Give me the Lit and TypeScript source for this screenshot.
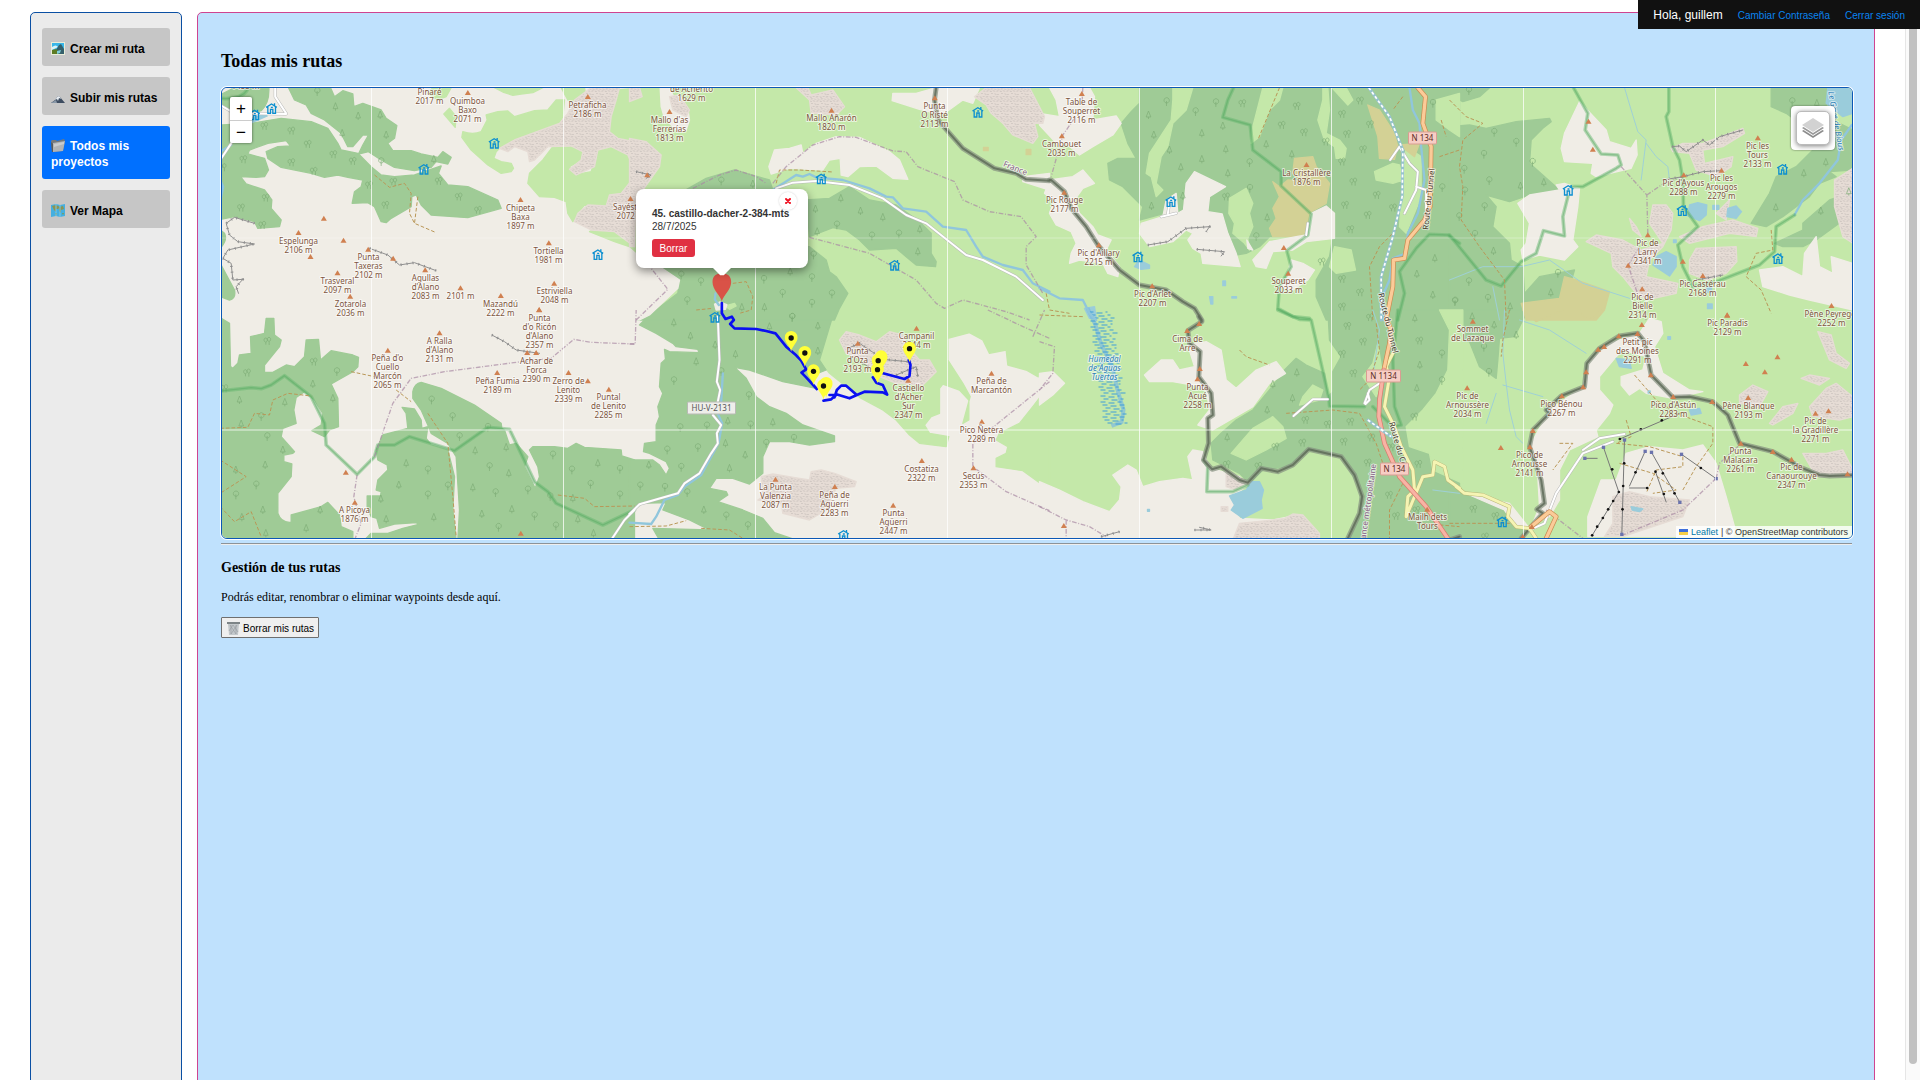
import { LitElement, html, svg, css } from "lit";
import { customElement, state } from "lit/decorators.js";

/* Map sheets: every sheet is surveyed at three units per map pixel. */
const SHEETS: Record<string, [number, number]> = {
  A: [215, 80], B: [215, 310], C: [630, 310], D: [630, 80],
  E: [1040, 80], F: [1040, 310], G: [1450, 80], H: [1450, 310], P: [620, 170],
};
type Shape = [string, string];

const place = (sheet: string, x: number, y: number): [number, number] => {
  const [ox, oy] = SHEETS[sheet];
  return [Math.round(ox + x / 3), Math.round(oy + y / 3)];
};
const onSheet = (sheet: string) => `translate(${SHEETS[sheet].join(" ")}) scale(0.33333)`;

const COVER: [string, Shape[]][] = [
  ["grass", [
    ["A", "M655 23H710L695 50L670 60L640 40Z M705 85L725 110L722 142L688 102Z M745 155Q775 165 800 155L818 120L815 105L850 95L880 93L900 110L960 92L1000 90L1025 60L1050 60L1045 110L1035 130L960 165L900 180L855 205L845 215L838 235L860 245L890 250L897 265L890 275L860 280L820 255L770 210L742 172Z M840 23H985L955 38L920 42L895 46L865 36Z M1040 23H1110L1115 55L1090 65L1060 60Z M1208 30L1260 25V180L1210 175L1185 155L1190 110Z"],
    ["A", "M1015 200L1070 200L1105 215L1100 240L1065 260L1080 285L1130 275L1150 210L1190 200L1240 220L1260 270V290L1220 340L1190 345L1175 380L1110 375L1090 400L1075 425L1060 400L1055 365L1020 352L975 350L940 310L945 280L985 240Z M1125 455L1150 443L1260 475V505L1200 485Z"],
    ["C", "M615 0L560 140L600 190L690 262L760 300L800 330L840 375L870 400L950 410L958 380L900 370L885 345L905 320L930 310V235L940 222L990 240L1018 270V330L1000 340L1022 260L1000 220L955 150L955 85L1020 68L1060 90L1080 130L1130 120L1135 165L1190 180L1225 200L1260 205V0Z M1260 225L1210 290L1170 340L1110 370L1100 390L1135 410L1130 430L1100 445V470L1180 482L1260 540Z"],
  ]],
  ["forest", [
    ["A", "M17 45L60 23H163Q165 70 140 92L112 100L17 80Z M222 23H348L360 50L385 32L415 42L418 80L445 70L500 90L515 115L547 137L540 175L520 190L535 212L590 212L620 222L670 232L685 215L710 232L700 252L665 245L650 262L600 272L540 262L500 240L462 215L432 222L445 195L462 165L445 165L415 200L400 200L380 160L330 120L290 100L275 75L240 60Z"],
    ["A", "M17 135L110 130L200 115L290 125L340 145L370 190L380 210L430 220L470 260L500 285L540 290L600 285L680 258L672 280L700 315L760 320L850 360L860 385L760 413L650 405L620 375L605 345L592 350L590 380L530 415L515 428L500 425L480 380L460 368L413 370L420 335L440 320L445 300L400 292L370 285L330 292L290 280L200 262L160 235L155 215L190 200L228 198L215 182L160 190L105 210L100 222L150 235L162 270L150 290L125 292L78 290L95 312L150 330L172 360L170 385L200 420L195 440L130 445L120 425L60 410L17 418Z M17 450L30 460Q40 480 17 505Z M17 550L60 630Q65 655 45 660L17 650Z"],
    ["B", "M17 23L45 40L48 170L55 175L70 160L75 135L110 130L108 80L150 70L155 25L178 25L180 75L200 90L195 110L150 165L150 187L175 187L215 165L240 170L270 140L275 90L312 88L318 150L350 122L415 135L432 142L430 170L415 185L350 222L370 265L372 350L345 360L330 380L292 362L320 345L325 310L300 270L270 245L245 262L238 300L245 340L205 355L200 380L240 425L235 430L208 435L208 455L232 462L230 500L190 550L190 610Q200 640 230 637V615L320 590L340 577L375 615L380 650L415 665V690H17Z"],
    ["B", "M595 245Q600 220 620 217L680 235L780 285L860 340L862 355L870 360L885 405L905 400L940 440L930 470L962 535L975 500L970 470L945 420L955 410L1020 410L1060 415L1085 400L1110 412L1220 420L1222 438L1260 450V690H730L735 600L725 440L700 400L650 370L640 345L620 300L595 265Z M563 292L600 297L620 330L622 355L640 350L635 385L650 405L700 420L720 500L715 600L725 690H450L470 670L520 670L565 655L613 643L605 638L540 642L495 655L487 625L470 620L458 590V558H498L500 545L485 540L490 510L520 480L518 465L490 450L485 420L505 375L580 355L575 310Z"],
    ["C", "M75 0L30 45L80 70L130 100L140 110L205 118L208 128L120 125L105 118L108 148L95 160L90 230L100 250L85 290L90 320L80 345L80 395L45 400L42 425L60 430L110 455L120 475L110 495L90 465L70 450L0 450V600L30 580L110 578L100 600L180 630L240 660L70 655L90 690H500L435 668L400 625L340 600L265 575L295 555L290 545L240 535L260 505L310 505L360 522L400 490V440L420 395L480 395L540 405L615 395V378L520 345L470 310L420 290L380 260L350 205L315 172L360 180L460 215L560 235L540 200L590 180L570 150L615 0Z"],
    ["D", "M160 335L230 295L315 270L420 300L430 330L300 400Z M70 500H540L590 540L600 575L620 590L655 640L630 685L615 720H20L60 705L145 640L150 600L95 560Z M530 360L600 355L660 320L720 360L800 375L870 425L905 460V520L920 545L918 560L860 555L830 530L800 505L720 510L690 480L650 450L610 443L540 470Z M1120 23H1200L1195 60L1150 55Z"],
    ["E", "M245 130L275 95L300 70V23H1260V720H860L830 650V600L870 530L885 440L870 380L800 470L690 470L660 500L620 520L590 525L565 460L545 400L505 395L510 350L555 320L465 275L440 310L430 390L410 400L375 400L300 420L310 380L250 320L210 300L205 250L235 235L290 235L265 190Z"],
    ["F", "M865 0L870 90L905 140L880 185V245L865 260L855 190L800 165L770 145L735 180L690 240L640 300L590 330L545 370L515 400L520 450L600 490L630 520L670 480L750 470L805 420L905 440L960 530L965 600L930 690H1260V0Z"],
    ["G", "M0 23H120L90 50L40 65L0 45Z M0 140L60 135L110 145L200 125L300 115L305 125L280 145L245 180L240 250L330 330L240 345L180 365L110 345L140 380L130 440L180 490L185 540L220 560L225 640L270 590L375 570L360 620L330 660L260 680L230 670L215 700L220 720H0Z M965 23H1150L1130 80L1095 85L1050 130L1010 100L965 80Z M905 430L960 340L980 290L1040 260L1100 200L1170 130L1210 150V270L1140 275L1160 290L1110 310L1080 350L1040 380L1000 410L950 440Z M975 490L1060 450V430L1140 360L1200 340L1210 400L1100 480L1060 500L1000 500Z"],
    ["H", "M0 0H235L195 80L150 85L145 150L140 205L90 170L60 95L0 90Z M0 530L100 570L160 600L195 650L240 660L215 690H0Z"],
  ]],
  ["grass", [
    ["E", "M400 23H460L440 90L400 130L385 200L365 230L350 310L370 330L350 350L335 290L320 280L330 220L395 120L400 60Z M670 23H730L720 60L690 90L660 170L635 190L640 140Z M850 23H865L870 90L860 160L900 180L920 205L915 235L890 235L885 200L855 180L835 120L850 60Z M570 355L620 325L640 370L630 400L640 440L625 475L630 510L615 490L580 460L585 430L568 400Z M877 23H920L940 60L925 75Z M885 500L935 510L948 570L890 580L870 560Z M1005 275L1060 250L1080 255L1090 300L1060 310L1010 300Z M1100 200L1145 230V350L1100 460L1080 440L1090 300Z M1190 60L1260 40V170L1230 150L1190 120Z"],
    ["F", "M575 430L640 355L700 320L730 350L740 385L680 420L620 450Z M790 260L820 225L850 240L840 270L780 285Z M1200 0L1230 60L1225 180L1190 250L1150 300L1100 350L1110 410L1170 430L1180 480L1270 520V0Z M970 200L1000 160L1015 100L1030 200L1010 260Z"],
    ["P", "M318 408L345 400L350 408L330 418Z"],
  ]],
  ["heath", [
    ["E", "M700 305L720 320L745 300L870 310L860 370L815 395L790 470L700 470L690 445L710 415L700 385L720 350Z M765 235L820 230L830 260L870 310L800 320L760 280Z M985 75L1020 90L1065 160L1075 200L1065 238L1020 235L1015 170Z M1080 195L1140 190L1125 230Z"],
    ["G", "M215 670L330 655L345 590L380 600L480 635L465 690L440 720H230Z"],
    ["H", "M220 0H340L260 35Z M395 0H455L430 25L400 20Z"],
    ["D", "M1062 202h14v10h-14Z M1190 208h14v16h-14Z"],
  ]],
  ["bare", [
    ["D", "M0 505L30 530L90 560L150 600L145 625L60 705L30 720H0Z M92 23L118 23L150 80L175 85L180 120L170 150L145 155L105 115L95 80Z M418 260L435 210L480 205L515 195L520 220L560 190L620 170L690 172L780 215L810 240L835 298L790 295L740 258L690 260L655 290L635 285L632 235L600 240L580 270L480 265L425 282Z M790 40L860 40L920 23H1050L1030 70L1000 60L945 100L920 100L870 88L788 62Z M1180 290L1260 280V330L1180 305Z"],
    ["E", "M30 23H150L165 50L160 120L230 108L245 130L220 165L160 200L120 225L80 190L60 200L0 135V100L60 110L50 60Z M30 300L100 290L130 270L165 310L130 325L105 360L120 400L160 440L175 465L215 480L200 510L240 560L235 590L205 580L190 550L120 540L90 550L95 520L110 490L95 455L50 435L30 400L45 360L15 340Z"],
    ["E", "M465 275L558 320L510 350L505 395L548 402L565 460L590 520L602 560L490 550L485 520L460 505L445 480L460 460L440 450L400 485L330 500L300 460L305 430L370 410L380 360L410 340L415 400L432 390L440 310Z M640 540L690 485L770 470L800 465L815 400L860 378L885 400V475L800 485L760 510L700 515L680 565L650 560Z M755 540L790 550L825 570L805 600L760 630L720 620L740 600Z M622 480L640 510L625 505Z"],
    ["F", "M445 105L500 95L545 120L560 210L590 235L650 180L710 155L738 190L690 220L640 290L520 360L475 345L510 300L500 240L460 225L400 215L330 215L315 195L365 150L400 150L420 180L465 170Z M0 515L60 540L130 575L210 605L240 570L245 530L220 495L265 465L290 480L310 530L360 515L430 505L460 510L445 440L460 420L490 425L500 450L515 475L600 500L625 525L580 560L600 625L700 630L780 615L840 690H0Z M0 190L40 185L75 220L40 255L0 285Z"],
    ["G", "M345 160L390 65L470 150L480 185L545 205L560 180L563 225L545 265L440 290L425 280L430 250L345 245L335 205Z M205 370L240 345L330 330L320 315L345 310L390 325L385 380L370 480L385 500L345 540L270 525L220 540L215 510L230 490L240 430Z M930 570L1000 560L1060 590L1065 520L1100 470L1110 560L1150 580L1145 530L1210 550V690L1080 660L1020 645L940 620Z"],
    ["H", "M600 25L635 35L640 70L615 110L640 190L720 240L760 245L670 265L590 250L570 235L540 255L515 225V200L580 180L590 140L520 120L500 140L450 200V240L490 285L480 310L440 360L445 380L360 420L330 480V570L300 620L250 640L270 590L265 500L240 410L300 300L400 230L420 150L480 100L570 70Z M455 510L500 510L530 430L600 410L700 420L760 405L800 460L830 560L855 650L850 680H415V620Z M60 555L180 580L240 655L200 650L165 600Z"],
    ["P", "M285 402L300 396L322 404L318 418L290 420Z"],
  ]],
  ["scree", [
    ["A", "M1060 100L1080 60L1130 23H1215L1205 60L1190 110L1185 155L1210 175L1260 185V270L1240 225L1190 200L1150 210L1140 260L1085 285L1065 268L1100 240L1105 215L1070 198L1000 200L960 240L945 245L940 215L900 200L880 215L855 205L900 180L1035 130Z M1260 290L1220 340L1185 345L1175 378L1120 375L1090 400L1080 425L1130 450L1200 455L1260 500Z"],
    ["C", "M630 90L650 65L690 75L740 95L780 65L820 75L835 110L870 150L900 150L920 185L880 225L800 220L750 200L700 150L650 130Z M385 570L400 560L395 500L430 492L510 505L540 510L545 485L575 480L615 490L680 515L675 530L620 535L590 600L540 630L460 610L455 580Z"],
    ["D", "M0 23H30L38 50L0 65Z M500 23H535L545 45L610 30L645 80L620 105L545 100L540 60Z M0 175L50 185L95 225L90 260L40 330L20 340L15 500H0Z M1035 50L1070 23H1200L1245 110L1240 130L1215 130L1225 170L1210 190L1150 165L1120 130L1085 100L1070 75Z M120 50L150 45L180 90L170 110L130 90Z"],
    ["F", "M600 640L700 630L735 625L760 612L790 615L840 670V690H580Z M560 480L630 520L590 540L560 530Z M545 590h20v14h-20Z"],
    ["G", "M410 485L440 465L520 480L575 510L640 490L600 430L610 375L650 375L670 400L665 450L640 500L600 540L590 590L685 610L680 640L590 660L560 640L520 590L490 560L485 520Z M665 205L700 190L760 190L880 145L885 160L820 200L760 210L765 250L850 230L845 260L800 290L740 270L720 220L670 215Z M720 540L740 505L860 500L862 545L830 580L770 600L720 580Z M690 470L760 440L850 420L925 445L920 470L840 460L720 490Z M1155 300L1210 265V490L1180 470L1155 380Z M800 400L840 360L830 420Z M540 415L560 440L575 470L550 450Z"],
    ["H", "M490 560L540 545L600 560L720 570L700 620L520 680H465L490 640Z M870 255L910 225L955 245L930 290L870 280Z M960 340L1000 290L1045 280L1030 310L970 345Z M1080 290L1130 235L1160 220L1210 260V320L1170 330L1090 320Z M1060 430L1130 430L1180 420L1210 480V500H1100Z M1055 205L1080 195L1140 205L1110 225Z M1105 65L1145 75L1160 130L1200 160L1190 175L1140 150Z"],
  ]],
  ["water", [
    ["A", "M112 115L150 102L158 108L112 128Z"],
    ["E", "M285 560L300 540L330 555V565L305 568Z M135 685L165 680L170 715L150 715Z M510 650l10 0l0 22l-6 0Z M550 603h8v14h-8Z M577 650h14v4h-14Z"],
    ["F", "M570 558L620 540L635 515L660 515L672 540L665 570L668 595L610 625L575 600L585 585Z M324 598h6v6h-6Z"],
    ["G", "M720 375L745 368L772 375L770 405L750 422L715 408Z M835 385L860 378L876 395L860 415L832 410Z M620 530L650 515L680 530V560L660 588L610 555Z M1135 23H1210V100L1180 110L1130 70Z M790 376h18v12h-18Z M772 620h14v16h-14Z M774 672h14v14h-14Z M672 480h8v8h-8Z"],
    ["H", "M500 145L540 150L545 175L510 170Z M720 300L750 295L755 310L725 315Z M545 590L580 597L570 605L548 600Z M655 80h8v8h-8Z M596 243h6v6h-6Z"],
  ]],
];

const LINES: [string, Shape[]][] = [
  ["stream", [
    ["D", "M430 330L500 285L520 290L540 282L560 292L640 300L720 325L770 350L790 352L820 385L890 395L940 440L1010 450L1040 500L1060 530L1120 555L1180 570L1210 610L1260 635"],
    ["C", "M0 638L65 642L80 620L105 570L145 555L165 530L215 495L267 400L278 340L262 305L275 275L280 190"],
    ["E", "M0 625L60 655L130 660L150 700L170 720"],
    ["E", "M1110 23L1120 90L1140 130L1145 200L1155 300L1135 400L1105 460L1100 520L1060 535L1050 600L1028 650L1032 720"],
    ["G", "M1035 405L1060 360L1110 310L1165 240L1175 180L1207 135"],
    ["A", "M17 215L50 195M17 300L26 320L17 365"],
    ["D", "M258 640L256 658L268 675"],
  ]],
  ["brook", [
    ["G", "M525 23L545 90L565 155L590 180L580 260L575 300M590 190L620 230L655 260L660 300M0 600L100 560L215 560L300 540L400 610L540 655M130 620L150 720"],
    ["H", "M165 0L160 130L170 220L180 300L200 380L220 400M160 225L280 260M210 30L300 60L410 130M110 340L140 250"],
    ["F", "M1000 0L1020 60L1000 200M1260 550L1180 540"],
  ]],
  ["park", [
    ["B", "M17 243L110 233L140 236L170 225L210 197L290 260L330 340L335 405L428 493L480 440L490 405L540 405L585 380L720 422L820 352L885 358L960 515L1000 545L1025 580L1165 645L1260 600"],
    ["E", "M582 23L565 60L550 112L632 135L640 210L725 275V318L815 402L805 465L742 512L755 560L720 620L715 685L760 710L810 715"],
    ["F", "M715 0L780 28L815 30L868 262L870 288L975 290M1075 0L1060 150L1065 290L1085 345L1060 350L1000 290M492 450L505 470L502 545L580 545L625 525"],
    ["E", "M1260 490L1225 465L1170 463L1130 505L1080 575L1095 640L1075 720"],
    ["G", "M0 465L45 520L110 600L155 618L215 545L260 520L282 452L345 468L340 410L355 350M365 320L400 320L500 265L515 255L505 225L455 222L407 150L415 100L372 23M658 23V95L650 110L670 200L690 240L700 300L702 380L745 440L685 495L700 560L730 620L800 605L930 555L975 515L980 440L1035 405"],
    ["A", "M17 55Q80 60 98 30"],
  ]],
  ["admin", [
    ["D", "M20 720L115 628L65 565M190 325L270 285L320 270L380 290L410 310M430 310L470 260L550 195L630 170L680 172L790 213L830 215L865 260L975 305L1000 360L1080 395L1175 410L1220 470L1190 500V555L1240 640M540 472L720 520L860 600L920 670L945 685L1000 660L1130 695L1200 720"],
    ["B", "M420 690L440 640L418 560L428 493M480 440L535 280L590 205L690 185L920 155L1010 145L1078 88L1130 97L1260 102"],
    ["C", "M0 102H17L20 0M1260 215L1080 360L1030 400V470L1130 545L1260 602M1075 0L1170 45L1260 85M1210 80L1245 0"],
    ["F", "M0 590L80 630L150 650L200 680M0 95L45 110L40 190L0 240M80 630V690"],
    ["E", "M130 23L128 60M105 115L70 165L35 290"],
    ["G", "M515 260L592 345L595 460M592 345L640 312L700 290M570 500L536 556L590 720"],
    ["H", "M800 505L810 460L870 405M800 505L700 600L520 675M290 600L400 685"],
  ]],
  ["trail", [
    ["A", "M480 285L525 322L570 310L590 340L585 400L600 430L665 458M610 350L600 430"],
    ["B", "M17 355L100 352L120 310L165 315L175 270L220 250L290 258M17 450L95 500L17 550M17 590L60 635L110 605L140 680M410 185L480 200M545 240L590 275M640 310L700 400L715 560L725 680M1030 555L1110 565L1140 590L1260 588"],
    ["C", "M0 650L110 648L170 632M215 655L300 660L340 685"],
    ["D", "M440 310L450 270L510 270L610 276M200 690L250 685M310 610L350 605L370 650L365 690L330 700"],
    ["E", "M720 23L680 120L655 180M1070 450L1020 500L990 560L1000 720M1090 50L1060 90M1200 230L1260 210M1205 120L1220 170M20 640L30 690L90 700"],
    ["F", "M600 120L620 140L690 165M1010 40L1020 120L990 210L960 240M740 310L880 300L960 310L1010 400L1030 460M1090 520L1050 600L1050 690M1150 640L1260 650M0 15L130 20"],
    ["G", "M0 60L50 110L100 130L40 180L30 260L40 320L35 420L90 500L165 600L170 720M965 450L970 510L920 520L890 590L935 630L965 700"],
    ["H", "M180 0L160 90L155 140M555 195L620 270L690 315M530 330L545 380L500 400L600 410L700 440V470L620 480L590 550M510 460L610 490L680 540L610 550M680 310L790 350V400L740 470L700 540M330 400L370 400L310 480M0 640L200 640"],
  ]],
  ["cliff", [
    ["A", "M120 430L60 412L35 430L45 465L70 485L120 492L40 510L25 535L50 550L55 600L85 598L65 620L72 640M465 505L520 525L555 555L600 548L665 572"],
    ["B", "M832 75L870 95L905 120L975 130"],
    ["E", "M325 495L385 485L440 445L510 440L500 455M472 508L555 515L545 528"],
    ["F", "M465 660L515 660L480 652M185 680L240 665"],
    ["G", "M668 200L690 198L710 215L760 180L780 195L810 170L880 150M640 300L700 290L760 275L815 272M740 600L820 585"],
    ["D", "M20 275L65 285L50 295"],
    ["C", "M655 115L690 100L735 130M760 148L835 155M800 195L860 170L865 200M700 160L740 185"],
  ]],
  ["state", [
    ["D", "M920 23L915 60L925 120L1000 205L1095 265L1160 280L1190 298L1260 302"],
    ["E", "M30 300L35 300L75 335L95 385L140 440L175 495L240 570L300 615L380 630L430 665L465 685L487 720"],
    ["F", "M478 20L487 35L445 62L450 100L482 125L478 200L515 250L520 315L505 325L507 400L492 450L518 478L545 470L600 510L625 518L665 475L715 485L760 465L808 418L905 440L945 495L968 560L960 610L925 685"],
    ["H", "M215 685L245 650L280 610L262 598L285 580L275 510L240 410L250 360L300 310L290 300L335 258L405 230L412 160L450 115L510 78L565 70L585 95L605 195L670 262L720 260L790 275L835 315L870 400L970 425L1060 475L1110 495L1140 498L1210 496"],
    ["F", "M1230 690L1260 680"],
  ]],
  ["minor", [
    ["C", "M0 612L30 583L145 550L165 520L210 490L245 430L265 400L262 370L275 345L250 315L265 275L272 240L262 215L270 150L265 20"],
    ["D", "M440 325L490 308L560 303L660 315L760 355L830 405L890 430L1010 525L1060 540L1160 590L1240 660"],
    ["H", "M240 660L285 640L320 550L400 430L490 395M400 420L450 385L525 372"],
    ["A", "M182 23V50L215 100M17 75L60 100L215 102"],
    ["E", "M1080 200L1052 240M1080 200L1110 250L1135 275L1130 330L1110 370L1095 400M1130 320L1160 330L1160 390M385 400L390 370M800 465L805 430M365 410L410 400"],
    ["F", "M762 318L820 268L865 268M975 280L990 240L1020 220M985 250L990 270L978 282"],
    ["B", "M1190 690L1230 630L1260 600"],
    ["A", "M17 240L50 190"],
  ]],
  ["secondary", [
    ["F", "M1060 130L1040 170L1050 200L1035 290L1065 350L1085 410L1120 480L1125 540L1105 560L1100 620L1150 500L1180 495L1185 455L1215 470L1225 510L1260 535"],
    ["H", "M20 530L45 550L100 555L180 590L175 620L200 650L240 655L260 685"],
  ]],
  ["primary", [
    ["E", "M1135 23L1158 50L1150 130L1175 200L1172 380L1155 420L1105 480L1095 535L1062 540L1060 620L1040 720"],
    ["F", "M1040 25L1055 60L1050 100L1033 180"],
    ["H", "M245 650L300 605L320 620L290 685"],
  ]],
  ["trunk", [["F", "M1033 180L1020 270L1018 320L1035 400L1080 500L1160 590L1225 685"]]],
  ["rail", [["E", "M988 23L1050 110L1090 210L1088 350L1060 470L1025 590V720"], ["F", "M985 330L1055 380"]]],
  ["lift", [
    ["H", "M462 412L508 546L428 676M525 390L517 673M587 424L540 528M540 534H593M606 427L691 577M618 485L650 576M696 433L800 506M406 445H443M511 387L690 310"],
  ]],
];

/* Peaks: sheet, x and y of the triangle, name lines. */
const PEAKS: [string, number, number, string][] = [
  ["A", 760, 38, "Quimboa|Baxo|2071 m"], ["A", 1120, 50, "Petraficha|2186 m"], ["A", 918, 359, "Chipeta|Baxa|1897 m"],
  ["A", 252, 458, "Espelunga|2106 m"], ["A", 461, 508, "Punta|Taxeras|2102 m"], ["A", 369, 579, "Trasveral|2097 m"],
  ["A", 407, 649, "Zotarola|2036 m"], ["A", 632, 570, "Agullas|d'Alano|2083 m"], ["A", 738, 624, "2101 m"],
  ["A", 859, 647, "Mazandú|2222 m"], ["A", 1019, 610, "Estriviella|2048 m"], ["A", 1003, 489, "Tortiella|1981 m"],
  ["A", 1248, 356, "Sayéstico|2072 m"], ["B", 974, 0, "Punta|d'o Ricón|d'Alano|2357 m"], ["B", 965, 128, "Achar de|Forca|2390 m"],
  ["B", 675, 69, "A Ralla|d'Alano|2131 m"], ["B", 520, 121, "Peña d'o|Cuello|Marcón|2065 m"], ["B", 848, 188, "Peña Fumia|2189 m"],
  ["B", 1062, 188, "Zerro de|Lenito|2339 m"], ["B", 1183, 238, "Puntal|de Lenito|2285 m"], ["B", 421, 577, "A Picoya|1876 m"],
  ["C", 861, 55, "Campanil|2344 m"], ["C", 685, 100, "Punta|d'Oza|2193 m"], ["C", 836, 211, "Castiello|d'Acher|Sur|2347 m"],
  ["C", 1086, 190, "Peña de|Marcantón"], ["C", 1057, 335, "Pico Ñetera|2289 m"], ["C", 877, 452, "Costatiza|2322 m"],
  ["C", 1032, 474, "Secús|2353 m"], ["C", 438, 508, "La Punta|Valenzia|2087 m"], ["C", 616, 530, "Peña de|Agüerri|2283 m"],
  ["C", 791, 586, "Punta|Agüerri|2447 m"], ["D", 120, 95, "Mallo d'as|Ferrerías|1813 m"], ["D", 606, 91, "Mallo Añarón|1820 m"],
  ["D", 916, 54, "Punta|O Risté|2113 m"], ["E", 127, 41, "Table de|Souperret|2116 m"], ["E", 67, 168, "Cambouet|2035 m"],
  ["E", 74, 337, "Pic Rouge|2177 m"], ["E", 178, 495, "Pic d'Aillary|2215 m"], ["E", 338, 618, "Pic d'Arlet|2207 m"],
  ["E", 801, 254, "La Cristallère|1876 m"], ["E", 746, 580, "Souperet|2033 m"], ["F", 443, 62, "Cima de|Arre"],
  ["F", 474, 207, "Punta|Acué|2258 m"], ["G", 925, 174, "Pic les|Tours|2133 m"], ["G", 703, 285, "Pic d'Ayous|2288 m"],
  ["G", 816, 271, "Pic les|Arougos|2279 m"], ["G", 595, 465, "Pic de|Larry|2341 m"], ["G", 578, 627, "Pic de|Bielle|2314 m"],
  ["G", 760, 587, "Pic Castérau|2168 m"], ["G", 1146, 677, "Pène Peyreget|2252 m"], ["H", 833, 15, "Pic Paradis|2129 m"],
  ["H", 70, 34, "Sommet|de Lazaque"], ["H", 53, 234, "Pic de|Arnoussère|2034 m"], ["H", 564, 71, "Petit pic|des Moines|2291 m"],
  ["H", 337, 258, "Pico Bénou|2267 m"], ["H", 671, 260, "Pico d'Astún|2283 m"], ["H", 896, 263, "Pène Blanque|2193 m"],
  ["H", 1098, 310, "Pic de|la Gradillère|2271 m"], ["H", 874, 400, "Punta|Malacara|2261 m"], ["H", 1026, 448, "Pic de|Canaourouye|2347 m"],
  ["H", 241, 411, "Pico de|Arnousse|2141 m"], ["F", 1163, 598, "Mailh dets|Tours"],
];
/* Captions whose summit lies elsewhere: sheet, x, first baseline, lines. */
const CAPTIONS: [string, number, number, string][] = [
  ["A", 645, 46, "Pinaré|2017 m"], ["D", 187, 36, "de Acherito|1629 m"], ["A", 93, 28, "1453 m"],
];
const SUMMITS: Record<string, string> = {
  A: "328,415 387,481 288,530 536,535 974,689", B: "938,128 1120,213 394,487 919,670", D: "53,285", F: "479,41 481,176 73,647",
  E: "733,503", G: "417,124 430,208 536,556 700,544 833,706",
  H: "577,44 508,78 446,118 464,110 410,186 401,231 250,362 604,195 788,275 970,425 1194,492 889,161 984,141 946,186 1137,303 154,413 247,650 220,680",
};
const HUTS: Record<string, string> = {
  A: "171,86 120,105 839,190 628,268 1150,524", C: "642,676", D: "575,297 795,556 1045,97 256,712",
  E: "394,365 295,531", G: "356,331 999,268 985,536 698,392", H: "158,636",
};
const TREES: Record<string, Record<string, string>> = {
  pine: {
    A: "363,80 431,108 497,105 515,165 383,160 658,238",
    B: "295,222 355,265 211,277 75,270 80,342 205,420 152,465 64,480 145,600 82,622 317,600 275,655 154,670 575,460 553,525 499,567 515,628 658,622 782,422 883,490 775,533 892,598 802,612 875,412 1150,460 1090,628 1075,565 1137,670",
    C: "133,38 183,78 257,105 318,133 420,50 565,48 565,123 200,155 295,333 288,400 430,337 347,435 300,475 58,465 223,600",
    D: "634,355 693,393 760,412 558,387 871,448 865,515 370,312 482,575 405,682 337,682 563,455",
    E: "327,105 343,165 390,210 487,160 550,138 487,238 424,262 559,208 565,280 680,193 757,223 683,413 336,378 430,348 1186,535 1132,582 1180,645",
    F: "772,188 700,223 759,265 683,300 563,382 1126,25 1141,165 1132,235",
    G: "213,318 283,307 132,513 304,638 182,680 1102,70 1063,280 1114,393 979,383 1129,247 1198,335 68,710",
    H: "134,45 200,75",
  },
  oak: {
    A: "308,35 500,245",
    B: "651,270 714,320 735,380 820,352 825,470 640,480 700,528 843,548 640,555 158,380 125,525 64,555 1015,435 1072,480 1216,478 1128,523 1216,555 940,540 1007,560 960,618 1024,648 852,652 140,320 367,185",
    C: "488,22 133,212 358,257 152,353 232,348 363,345 113,420 205,413 410,400 155,472 32,528 106,532 173,548 290,618 355,647 493,385 275,185",
    D: "275,303 622,435 727,468 808,462 403,598 459,640 547,593 607,642 488,712 214,605 155,585 173,662 547,670 552,525",
    E: "381,65 529,68 468,95 630,248 650,470 631,325 1180,70 1208,323 1246,665",
    F: "1207,132 1207,212",
    G: "58,32 134,157 103,223 200,187 249,247 119,302 44,268 46,333 105,380 29,410 76,463 58,605 115,655 17,663 325,580 1028,65",
    H: "103,112 118,187",
  },
  mixed: {
    A: "148,138 229,152 278,192 229,247 355,223 413,243 296,273 85,238 462,315 152,353 78,383 511,375 535,305 671,303 731,350 789,390 142,435 23,262",
    B: "157,93 296,155 96,188 28,235",
    E: "607,70 770,78 725,135 792,157 857,185 558,350 960,62 990,133 906,102 921,162 969,208 906,245 940,305 1010,345 1059,383 915,375 983,405 931,448 906,597 960,637 906,680 845,545",
    F: "990,22 922,48 969,95 1138,92 906,132 940,190 796,330 863,343 931,335 706,410 787,398 560,463 655,468 911,395 994,383 1123,320 1053,412 983,458 1135,462 1047,555 1129,600 1068,618",
    H: "70,597 136,618 105,680",
  },
};
const TREE_PATHS: Record<string, string> = {
  pine: "M0 -12L-7 6H7ZM0 6V12",
  oak: "M0 4A8 8 0 1 1 1 4ZM0 -2V13",
  mixed: "M-4 3A5 6 0 1 1 -3 3V11M6 1A5 6 0 1 1 7 1V12",
};

const points = (list: string) => list.split(" ").map((p) => p.split(",").map(Number));

const WAYPOINTS = "515,504 556,549 582,604 620,642 612,648 785,562 776,572 774,599 870,536";
const TRACK = "M307 399V430L318 447L337 440L343 450L332 462L345 475L410 477L440 483L468 490L500 530L530 556L545 572L560 598L546 608L560 622L592 657M612 692L635 688L650 675L630 675M645 682L652 660L665 647L680 647L712 675L690 685L648 672M712 675L735 665L790 667L803 674L790 645L770 638L760 622M785 608L855 627L870 618L873 585L868 570";

const MENU_ICONS = {
  picture: svg`<rect width="14" height="13" fill="#e9edd8"/><rect x="1" y="1" width="12" height="11" fill="#38b6e8"/><path d="M1 5Q5 2 7 5L1 8Z" fill="#d9f3f7"/><path d="M5 8L8 3L10 2L13 7V12H5Z" fill="#35606b"/><path d="M1 8L5 7L8 10L7 12H1Z" fill="#5d7c23"/><path d="M6 9L10 8L9 11L6 12Z" fill="#7fd0d8"/>`,
  mountain: svg`<path d="M0 12L4 9L7 5L9 6L14 12Z" fill="#3d4c60"/><path d="M4 9L7 5L9 6L10 8L8 7L7 10L6 8Z" fill="#e8edf2"/><path d="M0 12L5 9L6 12Z" fill="#8998a8"/>`,
  folder: svg`<path d="M0 2L1 1L5 1L6 2L13 0L14 2L12 12L1 13Z" fill="#74787b"/><path d="M2 4L14 2L12 12L2 13Z" fill="#b1b4b7"/><path d="M0 3L2 5V13L1 13Z" fill="#55595d"/><path d="M3 5L13 3V5L3 8Z" fill="#c9cccf"/>`,
  map: svg`<path d="M0 1L5 0L9 1L14 0V12L9 13L5 12L0 13Z" fill="#45afe0"/><path d="M1 2L5 1L9 3L7 5L5 5L5 8L3 6Z M8 3L12 2L13 5L10 6L10 9L8 7Z" fill="#8f944e"/><path d="M4 9L5 12L6 9ZM11 9L13 9L12 11Z" fill="#7f9c4e"/><path d="M5 0V12M9 1V13" stroke="#7cc7ea" fill="none"/>`,
};

const MENU: { icon: keyof typeof MENU_ICONS; label: string }[] = [
  { icon: "picture", label: "Crear mi ruta" },
  { icon: "mountain", label: "Subir mis rutas" },
  { icon: "folder", label: "Todos mis proyectos" },
  { icon: "map", label: "Ver Mapa" },
];

@customElement("topo-map")
class TopoMap extends LitElement {
  static styles = css`
    :host { display: block; height: 100%; }
    .canvas { display: block; width: 100%; height: 100%; }
    .base { fill: #f0ede6; }
    .grass { fill: #c4e8a9; stroke: #c4e8a9; }
    .forest { fill: #9fcb96; stroke: #9fcb96; }
    .heath { fill: #d3d195; stroke: #d3d195; }
    .bare { fill: #f0ede6; stroke: #f0ede6; }
    .scree { fill: url(#scree); stroke: #e6dcd5; }
    .water { fill: #9accdb; stroke: #9accdb; }
    .cover { stroke-width: 4; stroke-linejoin: round; }
    .line { fill: none; stroke-linejoin: round; stroke-linecap: round; }
    .stream { stroke: #90c6dc; stroke-width: 7; }
    .brook { stroke: #9fd0d6; stroke-width: 3; }
    .park { stroke: #62b56c; stroke-width: 11; opacity: 0.45; }
    .park-core { stroke: #4fa55c; stroke-width: 4; opacity: 0.4; }
    .admin { stroke: #a98aa4; stroke-width: 4; stroke-dasharray: 14 5 3 5; stroke-linecap: butt; opacity: 0.7; }
    .trail { stroke: #b99757; stroke-width: 3; stroke-dasharray: 11 6; stroke-linecap: butt; }
    .cliff { stroke: #8f8f8f; stroke-width: 3; }
    .cliff-teeth { stroke: #8f8f8f; stroke-width: 8; stroke-dasharray: 3 15; stroke-linecap: butt; }
    .state { stroke: #84907f; stroke-width: 15; opacity: 0.7; }
    .state-core { stroke: #5c6956; stroke-width: 6; opacity: 0.8; }
    .minor { stroke: #b9b9b9; stroke-width: 9; }
    .minor-core { stroke: #ffffff; stroke-width: 6; }
    .secondary { stroke: #b9b778; stroke-width: 12; }
    .secondary-core { stroke: #f5f4b3; stroke-width: 9; }
    .primary { stroke: #c98a50; stroke-width: 14; }
    .primary-core { stroke: #fbcb98; stroke-width: 10; }
    .trunk { stroke: #d9796b; stroke-width: 14; }
    .trunk-core { stroke: #f8b3a4; stroke-width: 10; }
    .rail { stroke: #97c3ce; stroke-width: 9; }
    .rail-core { stroke: #ffffff; stroke-width: 5; stroke-dasharray: 9 7; stroke-linecap: butt; }
    .lift { stroke: #777; stroke-width: 3; }
    .tree { fill: none; stroke: #7dac76; stroke-width: 2; }
    .seam { stroke: #fff; opacity: 0.75; }
    .seam-soft { stroke: #fff; opacity: 0.3; }
    .reed { stroke: #3f9ed8; stroke-width: 1; }
    .summit { fill: #d08050; }
    .label { font: 8px "Noto Sans", sans-serif; text-anchor: middle; fill: #7d5540; paint-order: stroke; stroke: rgba(255, 255, 255, 0.6); stroke-width: 2px; stroke-linejoin: round; }
    .wetland { fill: #2b7fb8; font-style: italic; }
    .region { fill: #855b85; }
    .street { fill: #4a3c2c; }
    .sign { fill: #f7cdc4; stroke: #d99d92; }
    .sign-local { fill: #eeeeea; stroke: #b9b9b5; }
    .sign-text { fill: #5a2b22; stroke: none; }
    .sign-text-local { fill: #555; stroke: none; }
    .hut { fill: none; stroke: #0c8fd0; stroke-width: 4; }
    .track { fill: none; stroke: #0a10f0; stroke-width: 8; stroke-linejoin: round; stroke-linecap: round; }
    .waypoint { fill: #ffff38; }
    .goal { fill: #d95247; }
  `;

  private lineLayer([kind, shapes]: [string, Shape[]]) {
    const draw = (cls: string) => shapes.map(([s, d]) => svg`<path class="line ${cls}" transform=${onSheet(s)} d=${d}></path>`);
    const cored = ["park", "state", "minor", "secondary", "primary", "trunk", "rail"].includes(kind);
    return [draw(kind), cored ? draw(`${kind}-core`) : "", kind === "cliff" ? draw("cliff-teeth") : ""];
  }

  private caption(s: string, x: number, y: number, text: string, cls = "") {
    const [px, py] = place(s, x, y);
    return text.split("|").map((line, i) => svg`<text class="label ${cls}" x=${px} y=${py + i * 9}>${line}</text>`);
  }

  private along(s: string, x: number, y: number, angle: number, text: string, cls: string) {
    const [px, py] = place(s, x, y);
    return svg`<text class="label ${cls}" transform="rotate(${angle} ${px} ${py})" x=${px} y=${py + 3}>${text}</text>`;
  }

  private summit(s: string, x: number, y: number) {
    return svg`<path class="summit" transform=${onSheet(s)} d="M${x} ${y - 8}L${x + 9} ${y + 7}H${x - 9}Z"></path>`;
  }

  private sign(s: string, x: number, y: number, width: number, text: string, local = false) {
    const [px, py] = place(s, x, y);
    return svg`<rect class=${local ? "sign-local" : "sign"} x=${px - width / 2} y=${py - 6} width=${width} height="12" rx="1"></rect>
      <text class="label ${local ? "sign-text-local" : "sign-text"}" x=${px} y=${py + 3}>${text}</text>`;
  }

  render() {
    const seamsX = [372, 564, 756, 948, 1140, 1332, 1524, 1716];
    const reeds = Array.from({ length: 38 }, (_, i) => {
      const y = 312 + i * 3;
      const x = 1089 + Math.round(i * 0.4) + ((i * 7) % 5);
      return svg`<path class="reed" d="M${x} ${y}h5m3 1h6m3 -1h${2 + (i % 4)}"></path>`;
    });
    return html`<svg class="canvas" viewBox="222 88 1631 450" preserveAspectRatio="xMidYMid slice" role="img" aria-label="Mapa de rutas">
      <defs>
        <pattern id="scree" width="30" height="30" patternUnits="userSpaceOnUse">
          <rect width="30" height="30" fill="#e6dcd5"></rect>
          <path d="M2 3l4 2M12 1l3 4M22 4l4-2M6 12l3-3M16 11l4 3M27 12l-3 3M2 20l4 3M11 18l3 3M20 21l5-1M5 27l4-1M15 26l3 3M26 26l2 3" stroke="#bfb8b4" stroke-width="3"></path>
        </pattern>
      </defs>
      <rect class="base" x="200" y="80" width="1700" height="470"></rect>
      <path class="grass" d="M631 80H1860V540H1040V310H631Z"></path>
      ${COVER.map(([kind, shapes]) => shapes.map(([s, d]) => svg`<path class="cover ${kind}" transform=${onSheet(s)} d=${d}></path>`))}
      ${Object.entries(TREES).map(([kind, sheets]) => Object.entries(sheets).map(([s, list]) => svg`<g transform=${onSheet(s)}>
        ${points(list).map(([x, y]) => svg`<path class="tree" transform="translate(${x} ${y})" d=${TREE_PATHS[kind]}></path>`)}</g>`))}
      <path d="M1088 308L1096 325L1102 345L1112 365L1118 390L1124 410L1122 422L1112 426" fill="none" stroke="#7cbbe0" stroke-width="4" opacity=".7"></path>
      ${reeds}
      ${LINES.map((layer) => this.lineLayer(layer))}
      <g transform=${onSheet("H")}>
        ${points("462,412 525,390 517,673 587,424 606,427 691,577 696,433 800,506 406,445").map(([x, y]) => svg`<rect x=${x - 5} y=${y - 5} width="10" height="10" fill="#6b73ad"></rect>`)}
        ${points("508,546 491,573 476,598 460,624 443,650 428,676 488,478 524,460 521,528 519,598 558,487 593,534 640,490 675,550 618,485 643,552 754,474 574,358 637,331 511,387").map(([x, y]) => svg`<circle cx=${x} cy=${y} r="4" fill="#111"></circle>`)}
      </g>
      ${seamsX.map((x) => svg`<path class="seam" d="M${x} 80V550"></path>`)}
      <path class="seam-soft" d="M200 238H1900"></path><path class="seam" d="M200 430H1900"></path>
      ${Object.entries(SUMMITS).map(([s, list]) => points(list).map(([x, y]) => this.summit(s, x, y)))}
      ${PEAKS.map(([s, x, y, text]) => [this.summit(s, x, y), this.caption(s, x, y + 33, text)])}
      ${CAPTIONS.map(([s, x, y, text]) => this.caption(s, x, y, text))}
      ${this.caption("F", 194, 157, "Humedal|de Aguas|Tuertas", "wetland")}
      ${this.along("D", 1157, 264, 22, "France", "region")}
      ${this.along("F", 983, 585, -82, "France métropolitaine", "region")}
      ${this.along("E", 1168, 357, -84, "Route du Tunnel", "street")}
      ${this.along("F", 1046, 40, 76, "Route du Tunnel", "street")}
      ${this.along("F", 1078, 405, 74, "Route du Col", "street")}
      ${this.along("G", 1160, 122, 80, "Le Gave de Bious", "wetland")}
      ${this.sign("E", 1149, 173, 28, "N 134")} ${this.sign("F", 1033, 198, 34, "N 1134")}
      ${this.sign("F", 1064, 477, 28, "N 134")} ${this.sign("C", 247, 293, 48, "HU-V-2131", true)}
      ${Object.entries(HUTS).map(([s, list]) => svg`<g transform=${onSheet(s)}>${points(list).map(([x, y]) => svg`<path class="hut" transform="translate(${x} ${y})" d="M-16 -4L0 -14L16 -4M9 -9V-16M-11 -5V14H-3V2H4V14H12V-5M-2 -4H4"></path>`)}</g>`)}
      <g transform=${onSheet("P")}>
        <path class="track" d=${TRACK}></path>
        ${points(WAYPOINTS).map(([x, y]) => svg`<path class="waypoint" d="M${x} ${y + 41}C${x - 4} ${y + 22} ${x - 20} ${y + 14} ${x - 19} ${y - 2}A19 19 0 0 1 ${x + 19} ${y - 2}C${x + 20} ${y + 14} ${x + 4} ${y + 22} ${x} ${y + 41}Z"></path>`)}
        ${points("515,504 556,549 582,604 612,648 776,572 774,599 870,536").map(([x, y]) => svg`<circle cx=${x} cy=${y} r="8" fill="#111"></circle>`)}
        <path class="goal" d="M307 394C302 374 279 360 279 336C279 318 291 310 307 310C323 310 335 318 335 336C335 360 312 374 307 394Z"></path>
      </g>
    </svg>`;
  }
}

@customElement("app-root")
class AppRoot extends LitElement {
  @state() private active = 2;
  @state() private popupOpen = true;

  static styles = css`
    :host { display: block; font-family: "Liberation Serif", "Times New Roman", serif; font-size: 12px; color: #000; }
    * { box-sizing: border-box; }
    button { font-family: "Liberation Sans", Arial, sans-serif; cursor: pointer; }
    .page { display: grid; grid-template-columns: 152px 1fr; gap: 15px; height: 100vh; overflow: hidden; padding: 12px 45px 0 30px; background: #fff; }
    .sidebar, .content { min-height: calc(100vh + 20px); border-radius: 5px; }
    .sidebar { display: flex; flex-direction: column; gap: 11px; padding: 15px 11px; border: 1px solid #0a4fa3; background: #ebebeb; }
    .entry { min-height: 38px; padding: 12px 9px 9px; border: 0; border-radius: 3px; background: #c6c6c6; color: #000; font-size: 12px; font-weight: bold; line-height: 16px; text-align: left; }
    .entry.active { background: #0070ff; color: #fff; }
    .entry-icon { width: 14px; height: 13px; margin-right: 5px; vertical-align: -2px; }
    .content { padding: 38px 22px 22px 23px; border: 1px solid #cf4490; background: #bfe1fd; }
    .title { margin: 0 0 15px; font-size: 18px; line-height: 21px; }
    .map { position: relative; height: 452px; margin-right: -1px; border: 1px solid #0b57b5; border-radius: 6px; box-shadow: 0 0 0 1px #fff; overflow: hidden; font-family: "Liberation Sans", Arial, sans-serif; }
    .zoom { position: absolute; left: 8px; top: 9px; display: flex; flex-direction: column; border-radius: 2px; box-shadow: 0 0 3px rgba(0, 0, 0, 0.6); overflow: hidden; }
    .zoom-button { width: 22px; height: 23px; padding: 1px 0 0; border: 0; background: #fff; font-size: 17px; line-height: 22px; }
    .zoom-button + .zoom-button { border-top: 1px solid #ccc; }
    .layers { position: absolute; right: 17px; top: 18px; display: grid; place-items: center; width: 44px; height: 44px; border-radius: 4px; background: #fff; box-shadow: 0 0 2px rgba(0, 0, 0, 0.6); }
    .layers-button { display: grid; place-items: center; width: 34px; height: 34px; padding: 0; border: 1px solid #bbb; border-radius: 5px; background: #fff; box-shadow: 0 1px 5px rgba(0, 0, 0, 0.5); }
    .layers-icon { width: 22px; height: 22px; }
    .popup { position: absolute; left: calc(50% - 401px); top: 101px; width: 172px; height: 79px; padding: 18px 16px; border-radius: 8px; background: #fff; box-shadow: 0 3px 10px rgba(0, 0, 0, 0.45); color: #333; font-size: 10px; line-height: 13px; }
    .popup-title { display: block; }
    .popup-tip { position: absolute; left: 77px; top: 79px; width: 18px; height: 8px; background: #fff; clip-path: polygon(0 0, 100% 0, 60% 90%, 40% 90%); }
    .popup-close { position: absolute; right: 11px; top: 3px; width: 18px; height: 18px; padding: 0; border: 0; border-radius: 50%; background: #fff; box-shadow: 0 0 2px rgba(0, 0, 0, 0.2); line-height: 0; }
    .delete { display: block; width: 43px; height: 18px; margin-top: 6px; padding: 0; border: 0; border-radius: 3px; background: #e03042; color: #fff; font-size: 10px; }
    .credit { position: absolute; right: 0; bottom: 0; display: flex; align-items: center; gap: 3px; height: 12px; padding: 0 4px 0 3px; background: rgba(255, 255, 255, 0.8); color: #333; font-size: 9px; line-height: 12px; }
    .credit-link { display: flex; align-items: center; gap: 3px; color: #0078a8; text-decoration: none; }
    .flag { width: 9px; height: 6px; }
    .rule { height: 2px; margin: 4px 0 15px; border: 0; border-top: 1px solid #8c9398; border-bottom: 1px solid #eeeeee; }
    .subtitle { margin: 0 0 14px; font-size: 14px; line-height: 16px; }
    .note { margin: 0 0 13px; line-height: 14px; }
    .wipe { display: flex; align-items: center; gap: 3px; height: 21px; padding: 1px 4px 0 5px; border: 1px solid #6f6f6f; border-radius: 1px; background: #efefef; color: #000; font-size: 10px; }
    .bin { width: 13px; height: 13px; }
    .session { position: fixed; z-index: 2; top: 0; right: 0; display: flex; align-items: center; gap: 15px; height: 29px; padding: 1px 15px 0; background: #111; color: #fff; font-family: "Liberation Sans", Arial, sans-serif; font-size: 12px; }
    .session-link { color: #0a84f0; font-size: 10px; text-decoration: none; }
    .scroll { position: fixed; top: 0; right: 0; bottom: 0; width: 15px; padding: 0 3px 16px 3px; border-left: 1px solid #e6e6e6; background: #fafafa; }
    .thumb { height: 100%; border-radius: 4px; background: #c1c1c1; }
  `;

  render() {
    return html`
      <div class="page">
        <nav class="sidebar">
          ${MENU.map((item, i) => html`<button class="entry ${i === this.active ? "active" : ""}" @click=${() => (this.active = i)}><svg class="entry-icon" viewBox="0 0 14 13" aria-hidden="true">${MENU_ICONS[item.icon]}</svg>${item.label}</button>`)}
        </nav>
        <main class="content">
          <h2 class="title">Todas mis rutas</h2>
          <section class="map">
            <topo-map></topo-map>
            <div class="zoom">
              <button class="zoom-button" aria-label="Acercar">+</button>
              <button class="zoom-button" aria-label="Alejar">−</button>
            </div>
            <div class="layers">
              <button class="layers-button" aria-label="Capas">
                <svg class="layers-icon" viewBox="0 0 22 22" aria-hidden="true">
                  <path d="M0 14L11 7L22 14L11 21Z" fill="#8c8c8c"></path><path d="M0 12L11 5L22 12L11 19Z" fill="#fff"></path>
                  <path d="M0 11L11 4L22 11L11 18Z" fill="#999"></path><path d="M0 9L11 2L22 9L11 16Z" fill="#fff"></path>
                  <path d="M0 8L11 1L22 8L11 15Z" fill="#d2d2d2"></path>
                </svg>
              </button>
            </div>
            ${this.popupOpen ? html`<div class="popup">
              <strong class="popup-title">45. castillo-dacher-2-384-mts</strong>
              <span>28/7/2025</span>
              <button class="delete">Borrar</button>
              <button class="popup-close" aria-label="Cerrar" @click=${() => (this.popupOpen = false)}>
                <svg width="18" height="18" viewBox="0 0 18 18"><path d="M7 7L11 11M11 7L7 11" stroke="#f01020" stroke-width="2" stroke-linecap="round"></path></svg>
              </button>
              <span class="popup-tip"></span>
            </div>` : ""}
            <div class="credit">
              <a class="credit-link" href="#leaflet"><svg class="flag" viewBox="0 0 9 6" aria-hidden="true"><path fill="#3f6fdb" d="M0 0h9v3H0z"></path><path fill="#f7cf48" d="M0 3h9v3H0z"></path></svg>Leaflet</a>
              <span>| © OpenStreetMap contributors</span>
            </div>
          </section>
          <hr class="rule" />
          <h3 class="subtitle">Gestión de tus rutas</h3>
          <p class="note">Podrás editar, renombrar o eliminar waypoints desde aquí.</p>
          <button class="wipe">
            <svg class="bin" viewBox="0 0 13 13" aria-hidden="true"><path d="M1 2L2 13H11L12 2Z" fill="#c3c8cb"></path><path d="M3 3L9 12M6 3L11 10M10 3L4 12M6 3L2 9M4 3V12M9 3V12" stroke="#93999d" stroke-width=".6"></path><rect y="0" width="13" height="2" fill="#7d8487"></rect></svg>
            Borrar mis rutas
          </button>
        </main>
      </div>
      <div class="scroll" aria-hidden="true"><div class="thumb"></div></div>
      <header class="session">
        <span>Hola, guillem</span>
        <a class="session-link" href="#password">Cambiar Contraseña</a>
        <a class="session-link" href="#logout">Cerrar sesión</a>
      </header>
    `;
  }
}
